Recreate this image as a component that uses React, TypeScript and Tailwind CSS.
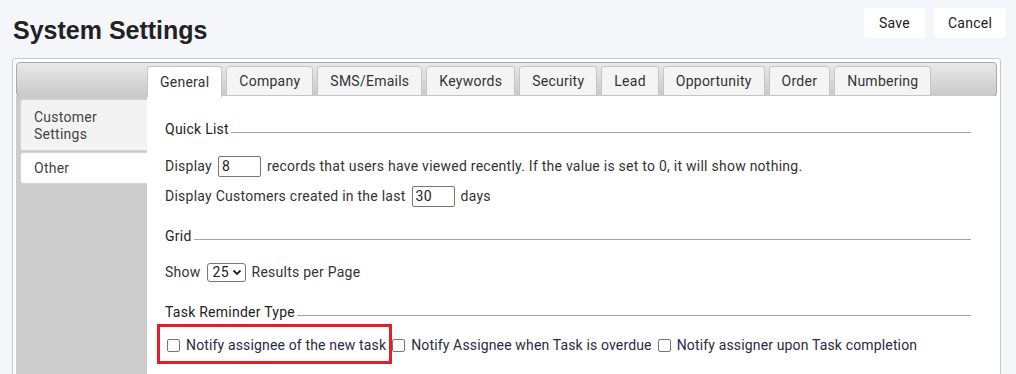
import React from "react";

const tabs = ["General", "Company", "SMS/Emails", "Keywords", "Security", "Lead", "Opportunity", "Order", "Numbering"];

function Legend({ title }: { title: string }) {
    return (
        <div className="flex h-[20px] items-center mr-[26px]">
            <span className="text-[#222] pr-[2px]">{title}</span>
            <div className="flex-1 h-px bg-[#a3a3a3] mt-[6px]" />
        </div>
    );
}

function TextBox({ value }: { value: string }) {
    return (
        <span className="inline-flex items-center h-[21px] w-[43px] mx-[6px] border border-[#767676] rounded-[2px] pl-[3px] text-[#222] bg-white">
            {value}
        </span>
    );
}

function Check({ label, boxed }: { label: string; boxed?: boolean }) {
    return (
        <label className="relative flex items-center h-[22px] mr-[6px]">
            <span className="w-[13px] h-[13px] border border-[#767676] rounded-[2px] bg-white" />
            <span className="ml-[6px] text-[#2a2a44]">{label}</span>
            {boxed && (
                <span className="absolute -left-[10px] -right-[6px] -top-[10px] -bottom-[8px] border-[3px] border-[#e61e2b]" />
            )}
        </label>
    );
}

export default function App() {
    return (
        <div className="min-h-screen bg-[#f5f6fa] font-['Roboto',sans-serif] text-[14px] tracking-[0.25px] text-[#333] overflow-hidden h-[374px]">
            <div className="flex items-start justify-between pl-[13px] pr-[10px]">
                <h1 className="mt-[15px] font-['Liberation_Sans',Arial,sans-serif] font-bold text-[25px] leading-[30px] tracking-normal text-[#222]">
                    System Settings
                </h1>
                <div className="flex gap-[9px] mt-[8px]">
                    <button className="h-[30px] w-[61px] bg-white rounded-[3px] text-[#222]">Save</button>
                    <button className="h-[30px] w-[72px] bg-white rounded-[3px] text-[#222]">Cancel</button>
                </div>
            </div>

            <div className="mt-[13px] ml-[12px] mr-[15px] border border-[#c9c9c9] rounded-[3px] bg-white p-[3px] pb-0 h-[320px] flex flex-col">
                <div className="h-[35px] border border-[#a9a9a9] rounded-[4px] bg-gradient-to-b from-[#e9e9e9] to-[#c9c9c9] flex items-end pl-[130px] gap-[4px] -mb-px">
                    {tabs.map((t, i) => (
                        <div
                            key={t}
                            className={
                                i === 0
                                    ? "h-[31px] px-[12px] flex items-center border border-b-0 border-[#c5c5c5] rounded-t-[3px] bg-white text-[#333] -mb-px relative z-10"
                                    : "h-[30px] px-[12px] flex items-center border border-[#c5c5c5] rounded-t-[3px] bg-[#f4f4f4] text-[#333]"
                            }
                        >
                            {t}
                        </div>
                    ))}
                </div>

                <div className="flex flex-1">
                    <div className="w-[131px] bg-[#cccccc] pt-[3px] pl-[4px] flex flex-col gap-px">
                        <div className="h-[52px] border border-r-0 border-[#d4d4d4] rounded-l-[3px] bg-[#f3f3f3] pl-[13px] pt-[9px] leading-[17px] text-[#444]">
                            Customer
                            <br />
                            Settings
                        </div>
                        <div className="h-[32px] border border-r-0 border-[#d4d4d4] rounded-l-[3px] bg-white pl-[13px] flex items-center text-[#444]">
                            Other
                        </div>
                    </div>

                    <div className="flex-1 bg-white pl-[18px] pt-[23px]">
                        <Legend title="Quick List" />
                        <div className="flex items-center h-[22px] mt-[16px]">
                            Display
                            <TextBox value="8" />
                            records that users have viewed recently. If the value is set to 0, it will show nothing.
                        </div>
                        <div className="flex items-center h-[22px] mt-[8px]">
                            Display Customers created in the last
                            <TextBox value="30" />
                            days
                        </div>

                        <div className="mt-[19px]">
                            <Legend title="Grid" />
                        </div>
                        <div className="flex items-center h-[22px] mt-[15px]">
                            Show
                            <span className="inline-flex items-center h-[19px] w-[39px] mx-[6px] border border-[#767676] rounded-[3px] pl-[5px] text-[#222] bg-white">
                                25
                                <svg width="10" height="10" viewBox="0 0 10 10" className="ml-[3px]">
                                    <path d="M1.5 3.5 L5 7 L8.5 3.5" fill="none" stroke="#222" strokeWidth="1.8" />
                                </svg>
                            </span>
                            Results per Page
                        </div>

                        <div className="mt-[19px]">
                            <Legend title="Task Reminder Type" />
                        </div>
                        <div className="flex items-center mt-[12px] pl-[2px] tracking-[0.15px]">
                            <Check label="Notify assignee of the new task" boxed />
                            <Check label="Notify Assignee when Task is overdue" />
                            <Check label="Notify assigner upon Task completion" />
                        </div>
                    </div>
                </div>
            </div>
        </div>
    );
}
